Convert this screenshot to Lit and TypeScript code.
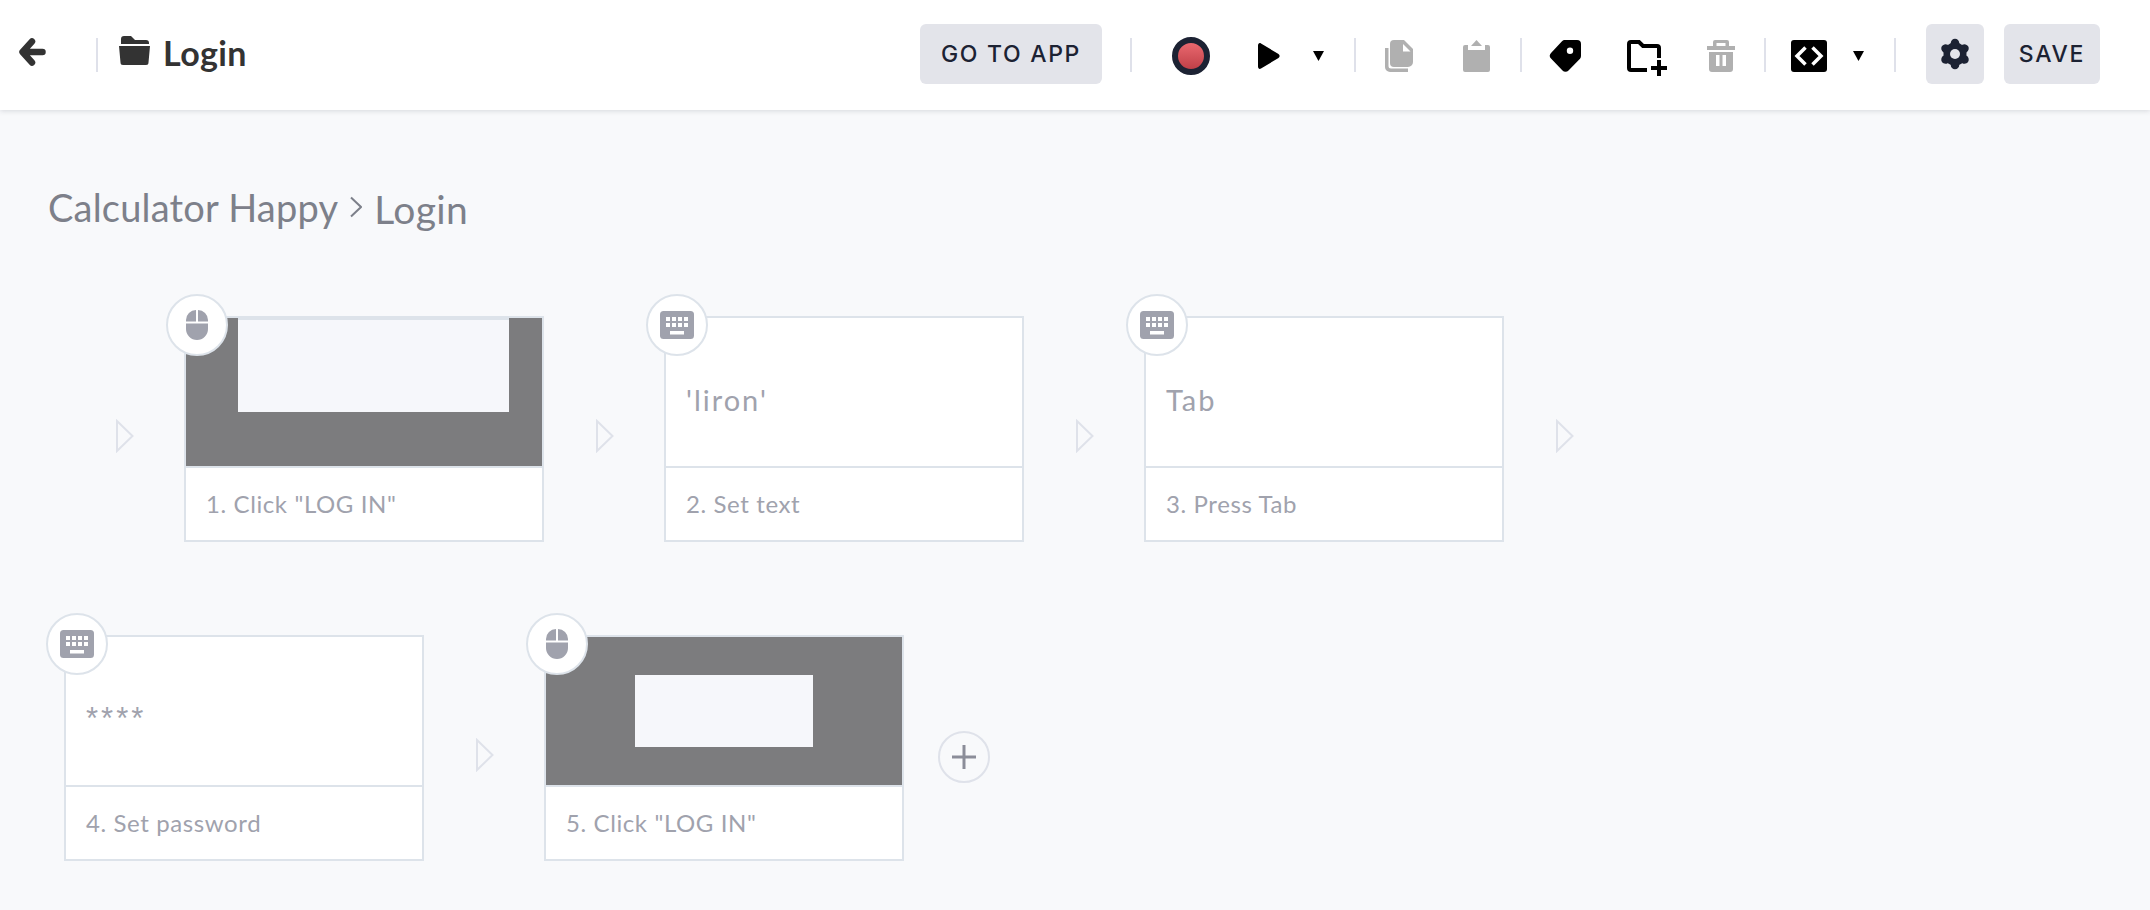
import { LitElement, html, css, svg } from "lit";
import { customElement } from "lit/decorators.js";

const mouseIcon = html`<svg class="mouse" viewBox="0 0 22 30"><path d="M10 0v11.500H0V10A10 10 0 0 1 10 0zM12 0a10 10 0 0 1 10 10v1.500H12zM0 13.500h22V19a11 11 0 0 1-22 0z"/></svg>`;

const keyCells = [0, 1, 2, 3].flatMap((c) => [0, 1].map((r) => svg`<rect x=${6 + c * 6} y=${6 + r * 6} width="4" height="4"/>`));
const keyboardIcon = html`<svg class="keyboard" viewBox="0 0 34 28"><rect class="kb" width="34" height="28" rx="3.500"/><g class="keys">${keyCells}<rect x="10" y="20" width="14" height="3.500"/></g></svg>`;

const step = (n: number, kind: "mouse" | "key", caption: string, body: unknown) => html`
  <div class="card">
    <div class="badge">${kind === "mouse" ? mouseIcon : keyboardIcon}</div>
    ${body}
    <div class="caption">${n}. ${caption}</div>
  </div>`;

const arrow = html`<svg class="arrow" viewBox="0 0 18 34"><path d="M1 2l15.500 15L1 32z"/></svg>`;

@customElement("app-root")
export class AppRoot extends LitElement {
  static styles = css`
    :host { display: block; width: 2150px; height: 910px; background: #f8f9fb; overflow: hidden; font-family: "Lato", "Liberation Sans", sans-serif; }
    svg { display: block; flex: none; }
    header { height: 110px; box-sizing: border-box; background: #fff; box-shadow: 0 1px 5px rgba(40,44,60,.16); display: flex; align-items: center; padding: 0 0 2px 19px; position: relative; }
    .sep { width: 2px; height: 34px; background: #dfe1ea; flex: none; margin-top: 2px; }
    .back { width: 27px; height: 28px; margin-bottom: 4px; }
    .s1 { margin-left: 50px; }
    .folder { width: 31px; height: 29px; margin-left: 21px; margin-bottom: 7px; }
    .title { margin-left: 13px; font-size: 34px; font-weight: 700; letter-spacing: .4px; color: #333; line-height: 1; margin-top: -2px; }
    .btn { height: 60px; border-radius: 6px; background: #e3e4ea; display: flex; align-items: center; justify-content: center; font-family: "Inter", sans-serif; font-weight: 500; font-size: 23px; letter-spacing: 1.700px; color: #1c2233; flex: none; box-sizing: border-box; }
    .go { width: 182px; margin-left: auto; }
    .s2 { margin-left: 28px; }
    .record { width: 38px; height: 38px; margin-left: 40px; border-radius: 50%; box-sizing: border-box; border: 6px solid #1c2233; background: linear-gradient(#e9686f, #c04048); margin-top: 4px; }
    .play { width: 22px; height: 26px; margin-left: 48px; margin-top: 4px; }
    .caret { width: 11px; height: 10px; margin-top: 4px; }
    .c1 { margin-left: 33px; }
    .s3 { margin-left: 30px; }
    .ic { margin-top: 4px; }
    .copy { width: 28px; height: 32px; margin-left: 29px; }
    .clip { width: 27px; height: 32px; margin-left: 50px; }
    .s4 { margin-left: 30px; }
    .tag { width: 32px; height: 32px; margin-left: 27px; }
    .newf { width: 40px; height: 36px; margin-left: 46px; margin-top: 8px; }
    .trash { width: 28px; height: 32px; margin-left: 40px; }
    .s5 { margin-left: 29px; }
    .code { width: 36px; height: 32px; margin-left: 25px; }
    .c2 { margin-left: 26px; }
    .s6 { margin-left: 30px; }
    .gearb { width: 58px; margin-left: 30px; }
    .gear { width: 32px; height: 32px; }
    .save { width: 96px; margin-left: 20px; margin-right: 50px; }

    main { padding: 0 48px; }
    .crumb { margin: 69px 0 0 0; display: flex; align-items: baseline; color: #7d808a; font-size: 38px; letter-spacing: .2px; line-height: 56px; height: 56px; }
    .chev { width: 12px; height: 22px; margin: 0 12px 0 12px; align-self: center; }
    .last { position: relative; top: 2px; font-size: 39px; letter-spacing: .4px; }
    .row { display: flex; align-items: center; }
    .r1 { margin-top: 81px; padding-left: 68px; }
    .r2 { margin-top: 93px; padding-left: 16px; }
    .arrow { width: 18px; height: 34px; margin: 14px 50px 0 52px; fill: none; stroke: #dfe2ea; stroke-width: 2; }
    .r1 .arrow:first-child { margin-left: 0; }
    .card { width: 360px; height: 226px; box-sizing: border-box; border: 2px solid #dde3ea; background: #fff; display: flex; flex-direction: column; position: relative; flex: none; }
    .badge { position: absolute; left: -20px; top: -24px; width: 62px; height: 62px; box-sizing: border-box; border-radius: 50%; border: 2px solid #dde3ea; background: #fff; display: flex; align-items: center; justify-content: center; z-index: 1; }
    .mouse { width: 22px; height: 30px; fill: #a0a2ad; }
    .keyboard { width: 34px; height: 28px; }
    .kb { fill: #a0a2ad; }
    .keys { fill: #fff; }
    .body { height: 148px; border-bottom: 2px solid #dde3ea; flex: none; }
    .text { display: flex; align-items: center; box-sizing: content-box; padding-left: 20px; font-size: 29px; letter-spacing: 2px; color: #a0a2ad; line-height: 1; }
    .text span { position: relative; top: 7px; }
    .text.stars { font-family: "Liberation Sans", sans-serif; font-size: 31px; letter-spacing: 3px; }
    .shot { background: #7c7c7e; display: flex; }
    .shot i { display: block; background: #f6f7fb; }
    .s-a i { width: 271px; height: 92px; margin-left: 52px; border-top: 4px solid #dde3ea; margin-top: -2px; }
    .s-b { align-items: center; justify-content: center; }
    .s-b i { width: 178px; height: 72px; }
    .caption { padding: 0 0 2px 20px; height: 72px; display: flex; align-items: center; font-size: 24px; letter-spacing: .6px; color: #a0a2ad; }
    .add { margin: 18px 0 0 34px; width: 52px; height: 52px; box-sizing: border-box; border-radius: 50%; border: 2px solid #dfe2ea; display: flex; align-items: center; justify-content: center; }
    .add svg { width: 24px; height: 24px; stroke: #8b8d99; stroke-width: 3; }
  `;

  render() {
    return html`
      <header>
        <svg class="back" viewBox="0 0 27 28" fill="none" stroke="#333" stroke-width="6.500" stroke-linecap="round" stroke-linejoin="round"><path d="M13 3.500L3.500 14l9.500 10.500M4 14h19.500"/></svg>
        <div class="sep s1"></div>
        <svg class="folder" viewBox="0 0 31 29" fill="#333"><path d="M2 8V3a3 3 0 0 1 3-3h7l4 4h11a3 3 0 0 1 3 3v1z"/><path d="M0 10h31l-1.500 16.500a2.500 2.500 0 0 1-2.500 2.500H4a2.500 2.500 0 0 1-2.500-2.500z"/></svg>
        <div class="title">Login</div>

        <div class="btn go">GO TO APP</div>
        <div class="sep s2"></div>
        <div class="record"></div>
        <svg class="play" viewBox="0 0 22 26"><path d="M0 2.500C0 .5 1.500-.5 3 .5l17.500 10.500c1.500 1 1.500 3 0 4L3 25.500C1.500 26.500 0 25.500 0 23.500z"/></svg>
        <svg class="caret c1" viewBox="0 0 11 10"><path d="M0 0h11L5.500 10z"/></svg>
        <div class="sep s3"></div>
        <svg class="copy ic" viewBox="0 0 28 32" fill="#b0b0b0"><path d="M0 8h3.500v18a2.500 2.500 0 0 0 2.500 2.500h17V32H5a5 5 0 0 1-5-5z"/><path d="M9 0h10l9 9v13a5 5 0 0 1-5 5H9a4 4 0 0 1-4-4V4a4 4 0 0 1 4-4z"/><path fill="#fff" d="M18 4v7.500h7.500z"/></svg>
        <svg class="clip ic" viewBox="0 0 27 32" fill="#b0b0b0"><path d="M2 5h3v5h17V5h3a2 2 0 0 1 2 2v23a2 2 0 0 1-2 2H2a2 2 0 0 1-2-2V7a2 2 0 0 1 2-2z"/><path d="M8 6l5.500-6L19 6z"/></svg>
        <div class="sep s4"></div>
        <svg class="tag ic" viewBox="0 0 32 32"><path fill-rule="evenodd" d="M13 1.200A4 4 0 0 1 16 0h12a4 4 0 0 1 4 4v12a4 4 0 0 1-1 2.700L19.500 30.500a4 4 0 0 1-6 0L2 18.500a4 4 0 0 1 0-5.500zM21 7.500a3.200 3.200 0 1 0 0 6.400 3.200 3.200 0 0 0 0-6.400z"/></svg>
        <svg class="newf ic" viewBox="0 0 40 36" fill="none" stroke="#000" stroke-width="4"><path d="M20 30H4a2 2 0 0 1-2-2V4a2 2 0 0 1 2-2h8l4 4h14a2 2 0 0 1 2 2v10"/><path d="M32 20v16M24 28h16"/></svg>
        <svg class="trash ic" viewBox="0 0 28 32" fill="#b0b0b0"><path fill-rule="evenodd" d="M6 6V2a2 2 0 0 1 2-2h12a2 2 0 0 1 2 2v4h6v4H0V6zM9.500 3v3h9V3z"/><path fill-rule="evenodd" d="M2 12h24v17a3 3 0 0 1-3 3H5a3 3 0 0 1-3-3zM9 15v11h3.500V15zM15.500 15v11H19V15z"/></svg>
        <div class="sep s5"></div>
        <svg class="code ic" viewBox="0 0 36 32"><rect width="36" height="32" rx="3"/><path fill="none" stroke="#fff" stroke-width="3.500" d="M14.500 7.500L6 16l8.500 8.500M21.500 7.500L30 16l-8.500 8.500"/></svg>
        <svg class="caret c2" viewBox="0 0 11 10"><path d="M0 0h11L5.500 10z"/></svg>
        <div class="sep s6"></div>
        <div class="btn gearb"><svg class="gear" viewBox="0 0 32 32"><g stroke="#1c2233" stroke-width="8.500" stroke-linecap="round"><path d="M16 5v22M6.500 10.500l19 11M25.500 10.500l-19 11"/></g><circle cx="16" cy="16" r="11.500" fill="#1c2233"/><circle cx="16" cy="16" r="5" fill="#e3e4ea"/></svg></div>
        <div class="btn save">SAVE</div>
      </header>
      <main>
        <div class="crumb"><span>Calculator Happy</span><svg class="chev" viewBox="0 0 12 22" fill="none" stroke="#7d808a" stroke-width="2"><path d="M1 1.500L11 11 1 20.500"/></svg><span class="last">Login</span></div>
        <div class="row r1">
          ${arrow}
          ${step(1, "mouse", 'Click "LOG IN"', html`<div class="body shot s-a"><i></i></div>`)}
          ${arrow}
          ${step(2, "key", "Set text", html`<div class="body text"><span>'liron'</span></div>`)}
          ${arrow}
          ${step(3, "key", "Press Tab", html`<div class="body text"><span>Tab</span></div>`)}
          ${arrow}
        </div>
        <div class="row r2">
          ${step(4, "key", "Set password", html`<div class="body text stars"><span>****</span></div>`)}
          ${arrow}
          ${step(5, "mouse", 'Click "LOG IN"', html`<div class="body shot s-b"><i></i></div>`)}
          <div class="add"><svg viewBox="0 0 24 24"><path d="M12 0v24M0 12h24"/></svg></div>
        </div>
      </main>`;
  }
}
